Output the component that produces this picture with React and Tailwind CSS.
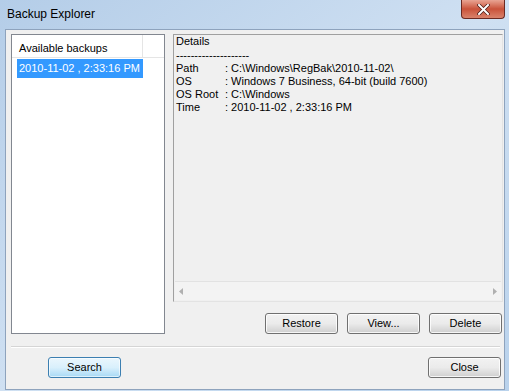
import React from 'react';

const font = { fontFamily: '"Liberation Sans", Arial, sans-serif' };

const WinButton = ({ children, primary }) => (
  <button
    className={
      primary
        ? 'w-[73px] h-[21px] rounded-[3px] border border-[#3c7fb1] bg-linear-to-b from-[#eaf6fd] via-[#d9f0fc] to-[#a7d9f5] text-[11px] text-black shadow-[inset_0_0_0_1px_#ffffff99]'
        : 'w-[73px] h-[21px] rounded-[3px] border border-[#707070] bg-linear-to-b from-[#f2f2f2] via-[#ebebeb] to-[#cfcfcf] text-[11px] text-black shadow-[inset_0_0_0_1px_#ffffffcc]'
    }
  >
    {children}
  </button>
);

const details = [
  ['Path', ': C:\\Windows\\RegBak\\2010-11-02\\'],
  ['OS', ': Windows 7 Business, 64-bit (build 7600)'],
  ['OS Root', ': C:\\Windows'],
  ['Time', ': 2010-11-02 , 2:33:16 PM'],
];

const App = () => {
  return (
    <div
      className="w-[509px] h-[391px] flex flex-col bg-linear-to-br from-[#b4cde8] via-[#cfe0f2] to-[#b9d2ec]"
      style={font}
    >
      {/* Title bar */}
      <div className="h-[29px] flex items-start justify-between">
        <span className="pl-[7px] pt-[5px] text-[12px] text-black">Backup Explorer</span>
        <div className="mr-[4px] w-[44px] h-[19px] rounded-b-[4px] border border-t-0 border-[#6b2a22] bg-linear-to-b from-[#e8a493] via-[#c9523a] to-[#d9826b] flex items-center justify-center">
          <svg width="13" height="11" viewBox="0 0 13 11">
            <path d="M2 1 L11 10 M11 1 L2 10" stroke="#4a1a14" strokeWidth="3.4" strokeLinecap="square" />
            <path d="M2 1 L11 10 M11 1 L2 10" stroke="#ffffff" strokeWidth="2" strokeLinecap="square" />
          </svg>
        </div>
      </div>

      {/* Client area */}
      <div className="flex-1 ml-[5px] mr-[4px] mb-[1px] bg-[#f0f0f0] border border-[#8ea3bd] flex flex-col pl-[5px] pr-[1px] pt-[4px]">
        <div className="flex gap-[8px]">
          {/* Backups list */}
          <div className="w-[154px] h-[300px] bg-white border border-[#828790] flex flex-col">
            <div className="h-[23px] flex border-b border-[#e5e5e5]">
              <div className="w-[131px] border-r border-[#e5e5e5] text-[11px] text-black pl-[7px] pt-[5px]">
                Available backups
              </div>
            </div>
            <div className="pl-[5px] pt-[1px]">
              <div className="w-[126px] h-[19px] bg-[#3399ff] text-white text-[11px] pl-[2px] flex items-center">
                2010-11-02 , 2:33:16 PM
              </div>
            </div>
          </div>

          {/* Details column */}
          <div className="w-[330px] flex flex-col">
            <div className="h-[268px] border border-[#a0a0a0] border-r-[#e3e3e3] border-b-[#e3e3e3] bg-[#f0f0f0] flex flex-col">
              <div className="flex-1 pl-[2px] text-[11px] leading-[13px] text-black">
                <div>Details</div>
                <div className="pt-[1px]">--------------------</div>
                {details.map(([k, v]) => (
                  <div key={k} className="flex">
                    <span className="w-[49px]">{k}</span>
                    <span>{v}</span>
                  </div>
                ))}
              </div>
              <div className="h-[19px] mx-[1px] mb-[1px] border-t border-[#e2e2e2] bg-[#f3f3f3] flex items-center justify-between px-[4px]">
                <svg width="5" height="7" viewBox="0 0 5 7">
                  <path d="M4 0 L0 3.5 L4 7 Z" fill="#b0b0b0" />
                </svg>
                <svg width="5" height="7" viewBox="0 0 5 7">
                  <path d="M1 0 L5 3.5 L1 7 Z" fill="#b0b0b0" />
                </svg>
              </div>
            </div>
            <div className="mt-[11px] flex justify-end gap-[9px] pr-[1px]">
              <WinButton>Restore</WinButton>
              <WinButton>View...</WinButton>
              <WinButton>Delete</WinButton>
            </div>
          </div>
        </div>

        {/* Separator */}
        <div className="mt-[12px] mr-[3px] border-t border-[#d5d5d5] border-b border-b-white" />

        {/* Footer */}
        <div className="mt-[9px] flex justify-between pl-[37px] pr-[2px]">
          <WinButton primary>Search</WinButton>
          <WinButton>Close</WinButton>
        </div>
      </div>
    </div>
  );
};

export default App;
